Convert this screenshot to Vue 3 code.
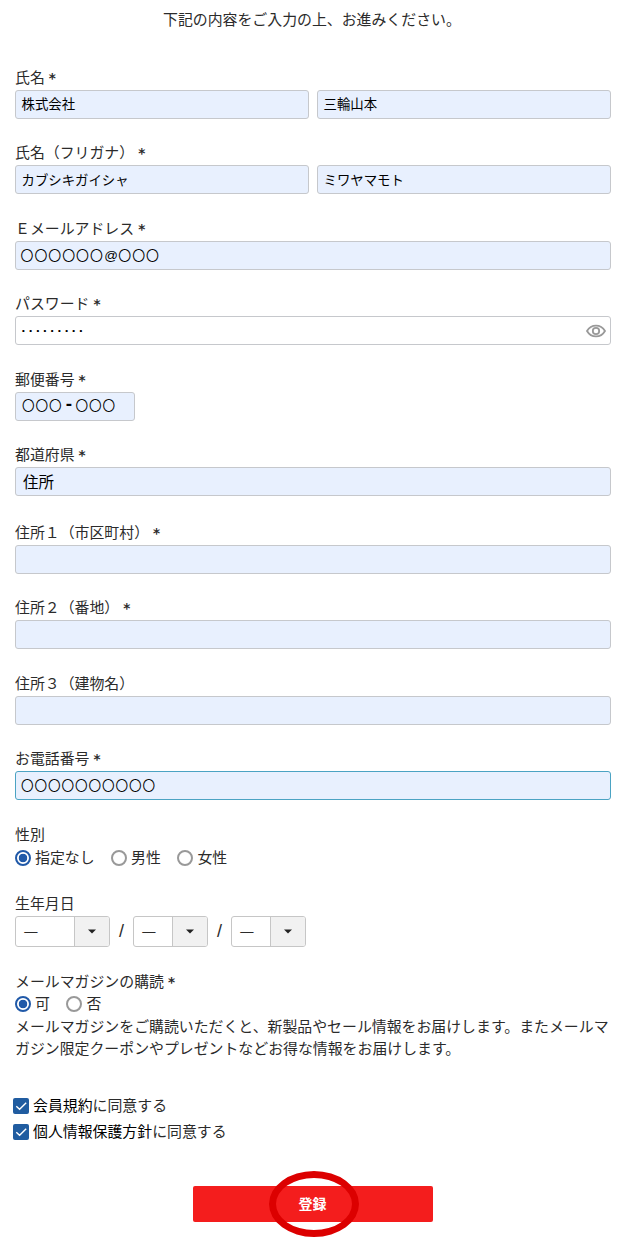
<template>
  <main class="page">
    <p class="lead">下記の内容をご入力の上、お進みください。</p>

    <form class="form" @submit.prevent>
      <div v-for="field in fields" :key="field.label" class="field" :class="field.cls">
        <div class="label">
          {{ field.label }}<span v-if="field.required" class="req">*</span>
        </div>
        <div class="controls">
          <div v-for="(value, i) in field.values" :key="i" class="control">
            <span class="value"><span v-for="(part, n) in value.split(/([@-])/)" :key="n" :class="{ mark: n % 2 }">{{ part }}</span></span>
            <svg v-if="field.cls === 'password'" class="eye" viewBox="0 0 20 14">
              <path d="M1 7C5.2 -0.2 14.8 -0.2 19 7C14.8 14.2 5.2 14.2 1 7Z" />
              <circle cx="10" cy="7" r="3.2" />
            </svg>
          </div>
        </div>
      </div>

      <!-- Gender -->
      <div class="label">性別</div>
      <div class="radios gender">
        <label v-for="g in genders" :key="g" class="radio">
          <span class="dot" :class="{ on: gender === g }" @click="gender = g"></span>{{ g }}
        </label>
      </div>

      <!-- Birthday -->
      <div class="label">生年月日</div>
      <div class="birthday">
        <template v-for="(part, i) in ['year', 'month', 'day']" :key="part">
          <span v-if="i" class="slash">/</span>
          <div class="select" :class="part">
            <span class="select-value">—</span>
            <span class="select-arrow">
              <svg viewBox="0 0 8 5"><path d="M0 0.5H8L4 4.5Z" /></svg>
            </span>
          </div>
        </template>
      </div>

      <!-- Mail magazine -->
      <div class="label">メールマガジンの購読<span class="req">*</span></div>
      <div class="radios magazine">
        <label v-for="m in ['可', '否']" :key="m" class="radio">
          <span class="dot" :class="{ on: magazine === m }" @click="magazine = m"></span>{{ m }}
        </label>
      </div>
      <p class="note">メールマガジンをご購読いただくと、新製品やセール情報をお届けします。またメールマガジン限定クーポンやプレゼントなどお得な情報をお届けします。</p>

      <!-- Agreements -->
      <div class="agreements">
        <div v-for="doc in ['会員規約', '個人情報保護方針']" :key="doc" class="agree">
          <svg class="check" viewBox="0 0 16 16">
            <rect width="16" height="16" rx="2" />
            <path d="M3.3 8.2L6.6 11.3L13.2 4.8" />
          </svg>
          <span><a>{{ doc }}</a>に同意する</span>
        </div>
      </div>

      <button class="submit" type="submit">
        登録
        <span class="ring"></span>
      </button>
    </form>
  </main>
</template>

<script setup>
import { ref } from 'vue'

const fields = [
  { label: '氏名', required: true, values: ['株式会社', '三輪山本'] },
  { label: '氏名（フリガナ）', required: true, values: ['カブシキガイシャ', 'ミワヤマモト'] },
  { label: 'Ｅメールアドレス', required: true, values: ['〇〇〇〇〇〇@〇〇〇'], cls: 'email' },
  { label: 'パスワード', required: true, values: ['·········'], cls: 'password' },
  { label: '郵便番号', required: true, values: ['〇〇〇-〇〇〇'], cls: 'zip' },
  { label: '都道府県', required: true, values: ['住所'], cls: 'pref' },
  { label: '住所１（市区町村）', required: true, values: [''] },
  { label: '住所２（番地）', required: true, values: [''] },
  { label: '住所３（建物名）', values: [''] },
  { label: 'お電話番号', required: true, values: ['〇〇〇〇〇〇〇〇〇〇'], cls: 'tel' },
]

const genders = ['指定なし', '男性', '女性']
const gender = ref('指定なし')
const magazine = ref('可')
</script>

<style>
body { background: #fff; }
</style>

<style scoped>
.page {
  box-sizing: border-box; width: 627px; height: 1254px;
  padding: 7.9px 16px 0 15px; overflow: hidden;
  font-family: 'Noto Sans CJK JP', sans-serif;
  font-size: 14.9px; line-height: 22px; color: #2b2b2b;
}
.lead { margin: 0 0 36px; padding-left: 148px; white-space: nowrap; }

/* Fields */
.field { margin-bottom: 22.5px; }
.label { height: 22px; display: flex; white-space: nowrap; }
.req {
  font-family: 'DejaVu Sans', sans-serif;
  font-size: 13.5px; font-weight: 700;
  margin-left: 4px; padding-top: 2px; line-height: 21px;
}
.controls { display: flex; gap: 8px; margin-top: 2px; }
.control {
  box-sizing: border-box; flex: 1; height: 29px;
  display: flex; align-items: center; justify-content: space-between;
  padding: 0 4px 0 5.5px;
  border: 1px solid #c6c8cc; border-radius: 3px;
  background: #e8f0fe; color: #000; font-size: 13.4px;
}
.value { line-height: 24px; padding-bottom: 2px; white-space: nowrap; }
.mark { display: inline-block; text-align: center; font-family: 'Liberation Sans', sans-serif; letter-spacing: 0; }

.email .control { padding-left: 4.5px; font-size: 12.9px; letter-spacing: 1px; }
.email .value { padding-bottom: 0; }
.email .mark { width: 14.5px; font-size: 13.5px; line-height: 20px; }
.password .control { background: #fff; }
.password .value {
  padding-bottom: 0;
  font-family: 'Liberation Sans', sans-serif;
  font-size: 13.5px; font-weight: 700; letter-spacing: 2.7px;
}
.zip .control {
  flex: 0 0 120px; padding-left: 6px;
  font-size: 12.6px; letter-spacing: 0.9px;
}
.zip .mark { width: 13px; font-size: 19px; font-weight: 700; line-height: 20px; }
.pref { margin-bottom: 24.5px; }
.pref .control { padding-left: 7px; font-size: 15.5px; }
.tel .control {
  padding-left: 5px; border-color: #4ba3c3;
  font-size: 12.6px; letter-spacing: 0.9px;
}

.eye { width: 20px; height: 14px; fill: none; stroke: #999; stroke-width: 1.8; }

/* Radios */
.radios { display: flex; gap: 16.5px; }
.gender { margin: 1px 0 24px; }
.magazine { margin-bottom: 1px; }
.radio { display: flex; gap: 4px; }
.dot {
  box-sizing: border-box; width: 16px; height: 16px; margin-top: 4px;
  border: 2px solid #999; border-radius: 50%; background: #fff;
}
.dot.on { border-color: #2059a8; background: radial-gradient(circle, #2059a8 4px, #fff 4.6px); }

/* Birthday */
.birthday { display: flex; align-items: center; margin: 2px 0 23px; }
.select {
  box-sizing: border-box; width: 75px; height: 31px; display: flex;
  border: 1px solid #c6c6c6; border-radius: 3px; overflow: hidden;
}
.select.year { width: 95px; }
.select-value { flex: 1; padding-left: 7.5px; font-size: 16.5px; line-height: 27px; }
.select-arrow {
  box-sizing: border-box; width: 35px;
  display: flex; align-items: center; justify-content: center;
  border-left: 1px solid #c6c6c6; background: #f1f1f1;
}
.select-arrow svg { width: 8px; height: 5px; fill: #222; }
.slash {
  width: 23px; text-align: center;
  font-family: 'Liberation Sans', sans-serif; font-size: 18px;
}

.note { margin: 0; width: 600px; }

/* Agreements */
.agreements { margin: 35px 0 0 -2px; }
.agree { display: flex; gap: 4px; height: 26px; line-height: 21px; }
.agree a { color: #000; }
.check { width: 16px; height: 16px; margin-top: 4px; fill: #205ca0; }
.check path { fill: none; stroke: #fff; stroke-width: 1.4; }

.submit {
  position: relative; display: block;
  width: 240px; height: 36px; margin: 40px 0 0 178px; padding: 0 1px 1px 0;
  border: none; border-radius: 2px; background: #f41d1d;
  font-family: inherit; font-size: 14px; font-weight: 700; color: #fff;
}
/* Highlight around the button caption */
.ring {
  position: absolute; left: 76px; top: -15px;
  box-sizing: border-box; width: 90px; height: 66px;
  border: 7px solid #dc0000; border-radius: 50%;
}
</style>
